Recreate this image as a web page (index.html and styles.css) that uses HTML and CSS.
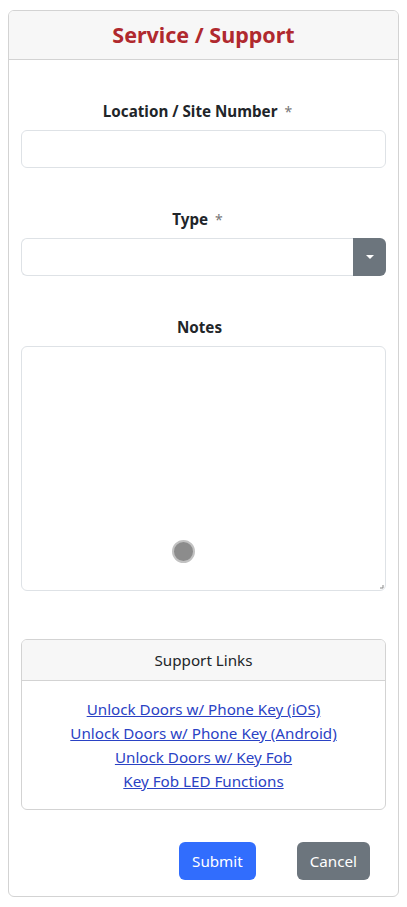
FILE: index.html
```html
<!DOCTYPE html>
<html>
<head>
<meta charset="utf-8">
<link rel="stylesheet" href="styles.css">
</head>
<body>
<div class="card">
  <div class="card-header"><h1 class="title">Service / Support</h1></div>
  <div class="card-body">
    <div class="group">
      <label class="label">Location / Site Number <span class="req">*</span></label>
      <div class="input"></div>
    </div>
    <div class="group">
      <label class="label">Type <span class="req">*</span></label>
      <div class="select">
        <div class="select-field"></div>
        <div class="select-btn"><span class="caret"></span></div>
      </div>
    </div>
    <div class="group">
      <label class="label">Notes</label>
      <div class="textarea">
        <span class="dot"></span>
        <svg class="grip" width="4" height="4" viewBox="0 0 4 4"><path d="M3 0 L3 3 L0 3" fill="none" stroke="#888" stroke-width="1"/></svg>
      </div>
    </div>
    <div class="links-card">
      <div class="links-header">Support Links</div>
      <div class="links-body">
        <a href="#" class="link">Unlock Doors w/ Phone Key (iOS)</a>
        <a href="#" class="link">Unlock Doors w/ Phone Key (Android)</a>
        <a href="#" class="link">Unlock Doors w/ Key Fob</a>
        <a href="#" class="link">Key Fob LED Functions</a>
      </div>
    </div>
    <div class="actions">
      <button class="btn btn-primary">Submit</button>
      <button class="btn btn-secondary">Cancel</button>
    </div>
  </div>
</div>
</body>
</html>
```
FILE: styles.css
```css
html, body {
  margin: 0;
  padding: 0;
  background: #fff;
}
body {
  padding: 10px 8px 0 8px;
  font-family: "Noto Sans", "Open Sans", sans-serif;
  font-size: 15.2px;
  color: #212529;
}
.card {
  width: 391px;
  box-sizing: border-box;
  border: 1px solid #d3d3d3;
  border-radius: 6px;
  overflow: hidden;
}
.card-header {
  background: #f7f7f7;
  border-bottom: 1px solid #d3d3d3;
  height: 48px;
  display: flex;
  align-items: center;
  justify-content: center;
}
.title {
  margin: 0;
  font-size: 21.5px;
  font-weight: 700;
  color: #b0292e;
  line-height: 1;
}
.card-body {
  padding: 0 12px 16px 12px;
}
.group {
  padding-top: 39px;
  display: flex;
  flex-direction: column;
}
.label {
  display: block;
  text-align: center;
  font-weight: 700;
  font-size: 15.2px;
  line-height: 24px;
  height: 24px;
  margin-bottom: 7px;
  padding-right: 8px;
}
.req {
  font-weight: 400;
  font-size: 14px;
  line-height: 1;
  color: #777;
  margin-left: 3px;
  margin-right: 4px;
}
.input {
  height: 38px;
  box-sizing: border-box;
  border: 1px solid #dee2e6;
  border-radius: 6px;
  background: #fff;
}
.select {
  display: flex;
  height: 38px;
}
.select-field {
  flex: 1;
  box-sizing: border-box;
  border: 1px solid #dee2e6;
  border-right: none;
  border-radius: 6px 0 0 6px;
}
.select-btn {
  width: 33px;
  background: #6c757d;
  border-radius: 0 6px 6px 0;
  display: flex;
  align-items: center;
  justify-content: center;
}
.caret {
  width: 0;
  height: 0;
  border-left: 4px solid transparent;
  border-right: 4px solid transparent;
  border-top: 4px solid #fff;
}
.textarea {
  position: relative;
  height: 245px;
  box-sizing: border-box;
  border: 1px solid #dee2e6;
  border-radius: 6px;
}
.dot {
  position: absolute;
  left: 150px;
  top: 193px;
  width: 19px;
  height: 19px;
  border-radius: 50%;
  background: #8c8c8c;
  border: 2px solid #c2c2c2;
}
.grip {
  position: absolute;
  right: 1px;
  bottom: 1px;
}
.links-card {
  margin-top: 48px;
  border: 1px solid #d3d3d3;
  border-radius: 6px;
  overflow: hidden;
}
.links-header {
  background: #f7f7f7;
  border-bottom: 1px solid #d3d3d3;
  height: 40px;
  display: flex;
  align-items: center;
  justify-content: center;
  font-size: 15.2px;
}
.links-body {
  padding: 16px 0;
  display: flex;
  flex-direction: column;
  align-items: center;
}
.link {
  color: #2a42c4;
  text-decoration: underline;
  line-height: 24px;
  font-size: 15.2px;
}
.actions {
  margin-top: 32px;
  display: flex;
  justify-content: flex-end;
  gap: 41px;
  padding-right: 16px;
}
.btn {
  height: 38px;
  border: none;
  border-radius: 6px;
  color: #fff;
  font-family: inherit;
  font-size: 15.2px;
  padding: 0 13px;
}
.btn-primary {
  background: #316dfd;
}
.btn-secondary {
  background: #6c757d;
}
```
